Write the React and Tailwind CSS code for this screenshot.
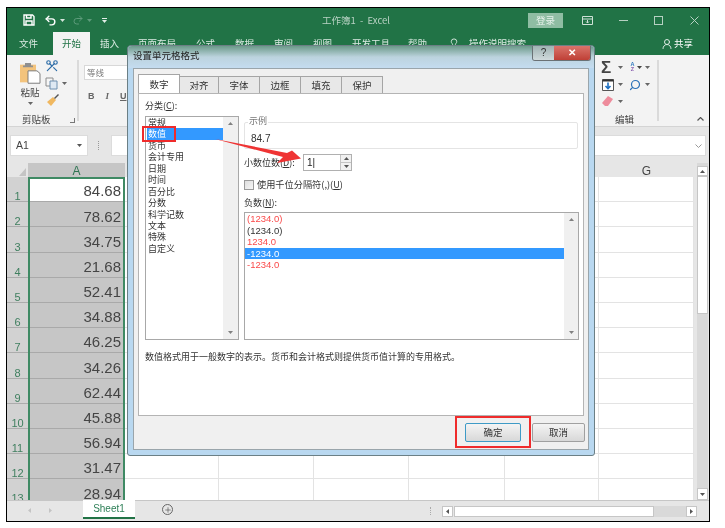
// Excel window with the "设置单元格格式" dialog on top

import { Scissors, Search, Plus, UserRound, Lightbulb, Undo2, Redo2 } from 'lucide-react'

const VALUES = ['84.68', '78.62', '34.75', '21.68', '52.41', '34.88', '46.25', '34.26', '62.44', '45.88', '56.94', '31.47', '28.94']
const COLUMNS = ['w-[94px]', 'w-[95px]', 'w-[95px]', 'w-[96px]', 'w-[94px]', 'w-[95px]']
const CATEGORIES = ['常规', '数值', '货币', '会计专用', '日期', '时间', '百分比', '分数', '科学记数', '文本', '特殊', '自定义']
const DIALOG_TABS = [
  { label: '数字', width: 'w-[42px]' },
  { label: '对齐', width: 'w-[39px]' },
  { label: '字体', width: 'w-[41px]' },
  { label: '边框', width: 'w-[41px]' },
  { label: '填充', width: 'w-[41px]' },
  { label: '保护', width: 'w-[41px]' },
]
const NEGATIVES = [
  { label: '(1234.0)', color: 'text-[#fa4a4a]' },
  { label: '(1234.0)', color: 'text-[#333333]' },
  { label: '1234.0', color: 'text-[#fa4a4a]' },
  { label: '-1234.0', color: 'bg-[#3399ff] text-white' },
  { label: '-1234.0', color: 'text-[#fa4a4a]' },
]

const Caret = ({ className = '' }) => (
  <svg width="5" height="3" viewBox="0 0 5 3" className={className}>
    <path d="M0 0h5L2.500 3z" fill="currentColor" />
  </svg>
)

function TitleBar() {
  return (
    <div className="h-6 flex items-center bg-[#217346] text-white relative">
      <svg width="12" height="12" viewBox="0 0 12 12" className="ml-4" fill="none" stroke="white" strokeWidth="1.4">
        <path d="M1 1h8.500L11 2.500V11H1z" />
        <path d="M3.500 1v3h4.500V1M3 11V7h6v4" />
      </svg>
      <Undo2 size={13} strokeWidth={2.6} className="ml-[9px]" />
      <Caret className="ml-[3px] text-[#d5e5dc]" />
      <Redo2 size={12} strokeWidth={2} className="ml-[7px] text-[#5e9b7b]" />
      <Caret className="ml-[3px] text-[#5e9b7b]" />
      <div className="ml-[10px] flex flex-col items-center gap-px">
        <div className="w-[5px] h-px bg-[#e3eee8]" />
        <Caret className="text-[#e3eee8]" />
      </div>
      <span className="ml-[215px] w-[71px] text-[9.500px] text-[#b9d2c4]">工作簿1&nbsp; -&nbsp; Excel</span>
      <span className="ml-[135px] w-[35px] h-[15px] bg-[#8fbda3] text-[#e8f2ec] text-[9.500px] flex items-center justify-center">登录</span>
      <svg width="11" height="9" viewBox="0 0 11 9" className="ml-[19px]" fill="none" stroke="#cfe2d7">
        <path d="M.5.5h10v8H.5zM.5 3h10M5.500 4v3M4 5.500l1.500 1.500L7 5.500" />
      </svg>
      <div className="ml-[26px] w-[9px] h-px bg-[#b6d1c2]" />
      <div className="ml-[26px] w-[9px] h-[9px] border border-[#b6d1c2]" />
      <svg width="9" height="9" viewBox="0 0 9 9" className="ml-[27px]" stroke="#b6d1c2">
        <path d="M.5.5l8 8M8.500.5l-8 8" />
      </svg>
    </div>
  )
}

function MenuBar() {
  return (
    <div className="h-[23px] flex items-center bg-[#217346] text-[9.500px] text-[#dcebe3]">
      <span className="ml-[12px] w-[34px]">文件</span>
      <span className="w-[37px] h-full bg-[#f3f3f3] text-[#217346] flex items-center justify-center">开始</span>
      <span className="ml-[10px] w-[38px]">插入</span>
      <span className="w-[58px]">页面布局</span>
      <span className="w-[39px]">公式</span>
      <span className="w-[39px]">数据</span>
      <span className="w-[39px]">审阅</span>
      <span className="w-[39px]">视图</span>
      <span className="w-[56px]">开发工具</span>
      <span className="w-[39px]">帮助</span>
      <Lightbulb size={11} className="w-[14px]" />
      <span className="ml-[8px] w-[192px]">操作说明搜索</span>
      <UserRound size={12} />
      <span className="ml-px text-white whitespace-nowrap">共享</span>
    </div>
  )
}

function Ribbon() {
  return (
    <div className="h-[72px] flex bg-[#f3f3f3] border-b border-[#d4d4d4] text-[#444444]">
      {/* clipboard group */}
      <div className="w-[57px] ml-[13px] shrink-0 flex flex-col">
        <div className="flex h-[56px]">
          <div className="w-[20px] flex flex-col items-center pt-[7px]">
            <svg width="22" height="23" viewBox="0 0 22 26" preserveAspectRatio="none">
              <path d="M1 3h16v20H1z" fill="#f3c37c" />
              <path d="M6 1h6v3h2v2H4V4h2z" fill="#8f8f8f" />
              <path d="M9 10h9l3 3v11H9z" fill="white" stroke="#777777" />
            </svg>
            <span className="text-[9.500px] leading-[12px] mt-[1px] whitespace-nowrap">粘贴</span>
            <Caret className="mt-[4px] text-[#666666]" />
          </div>
          <div className="ml-[5px] flex flex-col">
            <Scissors size={14} className="mt-[4px] -scale-y-100 rotate-90 text-[#2f6ea8]" />
            <div className="flex items-center mt-[4px]">
              <svg width="14" height="13" viewBox="0 0 14 13" fill="none">
                <path d="M1 1h7v8H1z" fill="#f6f6f6" stroke="#8c8c8c" />
                <path d="M5 4h7v8H5z" fill="#dfe9f3" stroke="#6f90b0" />
              </svg>
              <Caret className="ml-[3px] text-[#666666]" />
            </div>
            <svg width="14" height="13" viewBox="0 0 14 13" className="mt-[3px] ml-px">
              <path d="M1 9l6-5 3 3-5 6z" fill="#f0b860" />
              <path d="M8 5l4-4 1 1-4 4z" fill="#555555" />
            </svg>
          </div>
        </div>
        <div className="flex items-center text-[9.500px] leading-[12px] pl-[2px] pt-[2px] whitespace-nowrap">
          <span>剪贴板</span>
          <div className="ml-[19px] mt-[3px] w-[5px] h-[5px] border-r border-b border-[#777777]" />
        </div>
      </div>
      <div className="my-[5px] w-[2px] shrink-0 bg-[#dadada]" />
      {/* font group, mostly under the dialog */}
      <div className="ml-[5px] w-[60px] shrink-0 flex flex-col">
        <div className="mt-[10px] h-[15px] bg-white border border-[#d8d8d8] pl-[2px] text-[8.500px] leading-[13px] text-[#777777]">等线</div>
        <div className="mt-[10px] flex font-[Liberation_Sans] text-[9px] font-bold text-[#666666] gap-[11px] pl-[4px]">
          <span>B</span>
          <span className="italic font-[Liberation_Serif]">I</span>
          <span className="underline">U</span>
        </div>
      </div>
      {/* editing group */}
      <div className="ml-[457px] w-[56px] shrink-0 flex flex-col">
        <div className="flex items-center h-[18px] mt-[3px]">
          <span className="w-[14px] text-[17px] leading-none font-bold font-[Liberation_Sans] text-[#444444]">Σ</span>
          <Caret className="ml-[3px] text-[#666666]" />
          <div className="ml-[5px] w-[9px] flex flex-col items-center text-[5.500px] leading-[5.500px] font-bold font-[Liberation_Sans]">
            <span className="text-[#2f7ac0]">A</span>
            <span className="text-[#8a5fb0]">Z</span>
          </div>
          <Caret className="text-[#444444]" />
          <Caret className="ml-[3px] text-[#666666]" />
        </div>
        <div className="flex items-center h-[17px] pl-px">
          <svg width="12" height="12" viewBox="0 0 12 12" fill="none">
            <path d="M.5.5h11v11H.5z" stroke="#555555" fill="white" />
            <path d="M.5 1.500h11" stroke="#333333" strokeWidth="2" />
            <path d="M6 3.500v6M3.500 7L6 9.500 8.500 7" stroke="#1f6fc0" strokeWidth="1.600" />
          </svg>
          <Caret className="ml-[4px] text-[#666666]" />
          <Search size={12} strokeWidth={2.4} className="ml-[6px] -scale-x-100 text-[#2b72b8]" />
          <Caret className="ml-[4px] text-[#666666]" />
        </div>
        <div className="flex items-center h-[16px] pl-px">
          <svg width="12" height="10" viewBox="0 0 12 10">
            <path d="M0 7l6-7 5 3-5 7H3z" fill="#ee8c9c" />
          </svg>
          <Caret className="ml-[4px] text-[#666666]" />
        </div>
        <span className="text-[9.500px] leading-[12px] pl-[14px] mt-[4px] whitespace-nowrap">编辑</span>
      </div>
      <div className="my-[5px] w-[2px] shrink-0 bg-[#dadada]" />
      <svg width="7" height="4" viewBox="0 0 7 4" className="self-end shrink-0 mb-[5px] ml-[38px]" fill="none" stroke="#555555" strokeWidth="1.200">
        <path d="M.5 3.500l3-3 3 3" />
      </svg>
    </div>
  )
}

function FormulaBar() {
  return (
    <div className="h-[36px] flex pt-[8px] bg-[#e6e6e6]">
      <div className="ml-[3px] w-[78px] h-[21px] bg-white border border-[#dcdcdc] flex items-center justify-between px-[5px] text-[#444444]">
        <span className="text-[10.500px] font-[Liberation_Sans]">A1</span>
        <Caret className="text-[#555555]" />
      </div>
      <div className="ml-[10px] w-px h-[9px] mt-[6px] border-l border-dotted border-[#999999]" />
      <div className="ml-[12px] w-[595px] h-[21px] bg-white border border-[#dcdcdc] flex items-center justify-end pr-[3px]">
        <svg width="7" height="4" viewBox="0 0 7 4" fill="none" stroke="#999999">
          <path d="M.5.500l3 3 3-3" />
        </svg>
      </div>
    </div>
  )
}

function Sheet() {
  return (
    <div className="flex h-[337px] relative bg-[#e6e6e6]">
      <div className="w-[687px] flex flex-col">
        {/* column headers */}
        <div className="flex h-[14px]">
          <div className="w-[21px] flex items-end justify-end pr-[2px] pb-[1px]">
            <svg width="7" height="8" viewBox="0 0 7 8"><path d="M7 0v8H0z" fill="#c4c4c4" /></svg>
          </div>
          <div className="w-[97px] bg-[#c6c6c6] text-[#2f7553] text-[12px] leading-[16px] text-center font-[Liberation_Sans]">A</div>
          <div className="w-[474px]" />
          <div className="w-[95px] text-[#444444] text-[12px] leading-[16px] text-center font-[Liberation_Sans]">G</div>
        </div>
        {/* rows */}
        <div className="h-[323px] overflow-hidden relative">
          {VALUES.map((value, i) => (
            <div key={i} className="flex h-[25.2px]">
              <div className="w-[21px] bg-[#d2d2d2] border-b border-[#acacac] text-[#3f7f5f] text-[11px] leading-[10px] flex items-end justify-center font-[Liberation_Sans]">
                {i + 1}
              </div>
              <div className={`w-[97px] border-b flex items-center justify-end pt-[5px] pr-[4px] text-[15px] text-[#454545] font-[Liberation_Sans] ${i === 0 ? 'bg-white border-[#a9a9a9]' : 'bg-[#c6c6c6] border-[#a9a9a9]'}`}>
                {value}
              </div>
              {COLUMNS.map((width, c) => (
                <div key={c} className={`${width} bg-white border-r border-b border-[#e3e3e3]`} />
              ))}
            </div>
          ))}
          {/* selection frame over column A, its bottom runs past the tab bar */}
          <div className="absolute left-[21px] top-0 w-[97px] h-[340px] border-2 border-[#3f8a64]" />
        </div>
      </div>
      {/* vertical scrollbar */}
      <div className="ml-[3px] w-[11px] flex flex-col pt-[3px] pb-0 bg-[#d9d9d9]">
        <div className="h-[10px] bg-white border border-[#c6c6c6] flex items-center justify-center text-[#555555]">
          <Caret className="rotate-180" />
        </div>
        <div className="h-[138px] bg-white border border-[#c6c6c6]" />
        <div className="flex-1" />
        <div className="h-[12px] bg-white border border-[#c6c6c6] flex items-center justify-center text-[#555555]">
          <Caret />
        </div>
      </div>
    </div>
  )
}

function TabBar() {
  return (
    <div className="h-[21px] flex bg-[#e6e6e6] border-t border-[#c6c6c6] text-[#999999] relative">
      <Caret className="ml-[20px] mt-[8px] rotate-90 text-[#c4c4c4]" />
      <Caret className="ml-[16px] mt-[8px] -rotate-90 text-[#c4c4c4]" />
      <div className="ml-[30px] -mt-px w-[52px] h-[19px] bg-white border-b-2 border-[#217346] text-[#2f8058] text-[10px] leading-[18px] text-center font-[Liberation_Sans]">Sheet1</div>
      <div className="ml-[27px] mt-[3px] w-[11px] h-[11px] rounded-full border border-[#666666] flex items-center justify-center text-[#555555]">
        <Plus size={8} strokeWidth={2} />
      </div>
      <div className="ml-[257px] mt-[6px] h-[8px] w-px border-l border-dotted border-[#aaaaaa]" />
      <div className="ml-[11px] mt-[5px] w-[11px] h-[11px] bg-white border border-[#c6c6c6] flex items-center justify-center text-[#555555]">
        <Caret className="rotate-90" />
      </div>
      <div className="ml-[1px] mt-[5px] w-[200px] h-[11px] bg-white border border-[#c6c6c6]" />
      <div className="mt-[5px] w-[32px] h-[11px] bg-[#d9d9d9]" />
      <div className="mt-[5px] w-[11px] h-[11px] bg-white border border-[#c6c6c6] flex items-center justify-center text-[#555555]">
        <Caret className="-rotate-90" />
      </div>
    </div>
  )
}

function ListScrollbar({ width }) {
  return (
    <div className={`${width} bg-[#f0f0f0] flex flex-col items-center justify-between py-[5px] text-[#808080]`}>
      <Caret className="rotate-180" />
      <Caret />
    </div>
  )
}

function DialogButton({ label, focused }) {
  return (
    <div
      className={`h-[19px] rounded-[2px] border flex items-center justify-center text-[9.500px] text-[#333333] bg-gradient-to-b from-[#f4f4f4] to-[#d8d8d8] ${
        focused ? 'w-[56px] border-[#3e9ac6]' : 'w-[53px] border-[#a0a0a0]'
      }`}
    >
      {label}
    </div>
  )
}

function FormatDialog() {
  return (
    <div className="absolute left-[120px] top-[37px] w-[468px] h-[411px] rounded-t-[4px] rounded-b-[3px] border border-[#6b7f85] bg-[#b9d8f0] flex flex-col px-[5px] pb-[5px] text-[#333333] text-[9px]">
      {/* glass title strip */}
      <div className="-mx-[5px] h-[22px] px-[5px] rounded-t-[4px] flex bg-gradient-to-b from-[#6c9a8a] via-[#bcd3de] to-[#c4dcf0]">
        <span className="pt-[2px] text-[9.500px] leading-[14px] text-[#222222]">设置单元格格式</span>
        <div className="ml-auto -mr-[2px] flex h-[15px] rounded-b-[3px] border border-t-0 border-[#6a7175] overflow-hidden">
          <span className="w-[21px] bg-gradient-to-b from-[#9fb3b3] to-[#d0dadc] text-center text-[10px] leading-[14px] font-[Liberation_Sans] text-[#333333]">?</span>
          <span className="w-[36px] bg-gradient-to-b from-[#d9736a] to-[#bf3f36] text-center text-[10px] leading-[14px] font-bold text-white font-[Liberation_Sans]">✕</span>
        </div>
      </div>

      <div className="flex-1 bg-[#f0f0f0] border border-[#9aa5ab] flex flex-col px-[4px] pt-[6px]">
        {/* tabs */}
        <div className="flex h-[18px] relative z-10">
          {DIALOG_TABS.map((tab, i) => (
            <div
              key={tab.label}
              className={`${tab.width} flex items-center justify-center text-[9.500px] border-t border-r border-[#a5a5a5] ${
                i === 0 ? 'bg-white border-l h-[19px] -mt-px' : 'bg-[#e8e8e8] mt-px'
              }`}
            >
              {tab.label}
            </div>
          ))}
        </div>

        {/* tab page */}
        <div className="h-[323px] bg-white border border-[#b4b4b4] flex flex-col">
          <div className="flex pl-[6px] gap-[5px]">
            <div className="w-[94px] flex flex-col">
              <div className="h-[12px] mt-[6px] mb-[4px] leading-[12px]">分类(<u>C</u>):</div>
              <div className="h-[224px] border border-[#a8a8a8] flex">
                <div className="w-[77px] pl-px">
                  {CATEGORIES.map((name, i) => (
                    <div key={name} className={`h-[11.450px] leading-[11.450px] pl-px ${i === 1 ? 'bg-[#3399ff] text-white' : ''}`}>
                      {name}
                    </div>
                  ))}
                </div>
                <ListScrollbar width="flex-1" />
              </div>
            </div>

            <div className="w-[335px] flex flex-col">
              <div className="relative mt-[28px] w-[334px] h-[27px] border border-[#e4e4e4] rounded-[2px] pl-[6px] pt-[9px] text-[10px] leading-[14px] font-[Liberation_Sans]">
                84.7
                <span className="absolute -top-[9px] left-[3px] px-px bg-white text-[#777777] text-[9px] leading-[14px] font-[Noto_Sans_CJK_SC]">示例</span>
              </div>
              <div className="mt-[5px] h-[17px] flex items-center">
                <span className="w-[59px] whitespace-nowrap">小数位数(<u>D</u>):</span>
                <div className="w-[49px] h-[17px] border border-[#b0b0b0] flex">
                  <span className="flex-1 pl-[3px] text-[10px] leading-[15px] font-[Liberation_Sans] text-[#222222]">1|</span>
                  <div className="w-[11px] flex flex-col border-l border-[#c4c4c4] text-[#555555]">
                    <div className="flex-1 flex items-center justify-center bg-[#f1f1f1] border-b border-[#c4c4c4]"><Caret className="rotate-180" /></div>
                    <div className="flex-1 flex items-center justify-center bg-[#f1f1f1]"><Caret /></div>
                  </div>
                </div>
              </div>
              <div className="mt-[8px] h-[11px] flex items-center gap-[3px]">
                <div className="w-[10px] h-[10px] border border-[#9a9a9a] bg-gradient-to-br from-[#dedede] to-[#f6f6f6]" />
                <span className="text-[9.200px]">使用千位分隔符(,)(<u>U</u>)</span>
              </div>
              <div className="mt-[7px] h-[12px] leading-[12px]">负数(<u>N</u>):</div>
              <div className="mt-[3px] h-[128px] border border-[#a8a8a8] flex">
                <div className="flex-1 text-[9.500px] font-[Liberation_Sans]">
                  {NEGATIVES.map((row, i) => (
                    <div key={i} className={`h-[11.500px] leading-[11.500px] pl-[2px] ${row.color}`}>{row.label}</div>
                  ))}
                </div>
                <ListScrollbar width="w-[14px]" />
              </div>
            </div>
          </div>
          <p className="mt-[11px] pl-[6px] text-[9px] leading-[12px] whitespace-nowrap">
            数值格式用于一般数字的表示。货币和会计格式则提供货币值计算的专用格式。
          </p>
        </div>

        {/* buttons */}
        <div className="flex justify-end gap-[11px] pt-[7px] -mr-px">
          <DialogButton label="确定" focused />
          <DialogButton label="取消" />
        </div>
      </div>
    </div>
  )
}

export default function App() {
  return (
    <div
      className="relative w-[725px] h-[528px] overflow-hidden bg-white pl-[6px] pt-[7px] blur-[0.5px]"
      style={{ fontFamily: '"Noto Sans CJK SC", "Liberation Sans", sans-serif' }}
    >
      <div className="relative w-[704px] h-[515px] border border-black overflow-hidden flex flex-col">
        <TitleBar />
        <MenuBar />
        <Ribbon />
        <FormulaBar />
        <Sheet />
        <TabBar />
        <FormatDialog />
      </div>

      {/* red annotations */}
      <div className="absolute left-[142px] top-[126px] w-[34px] h-[16px] border-2 border-[#ef2b2b]" />
      <div className="absolute left-[455px] top-[416px] w-[76px] h-[32px] border-2 border-[#ef2b2b]" />
      <svg className="absolute left-0 top-0" width="725" height="528" viewBox="0 0 725 528">
        <polygon points="215,139 287,153 292,150.500 301,158.500 277,163 283,157" fill="#ef3434" />
      </svg>
    </div>
  )
}
